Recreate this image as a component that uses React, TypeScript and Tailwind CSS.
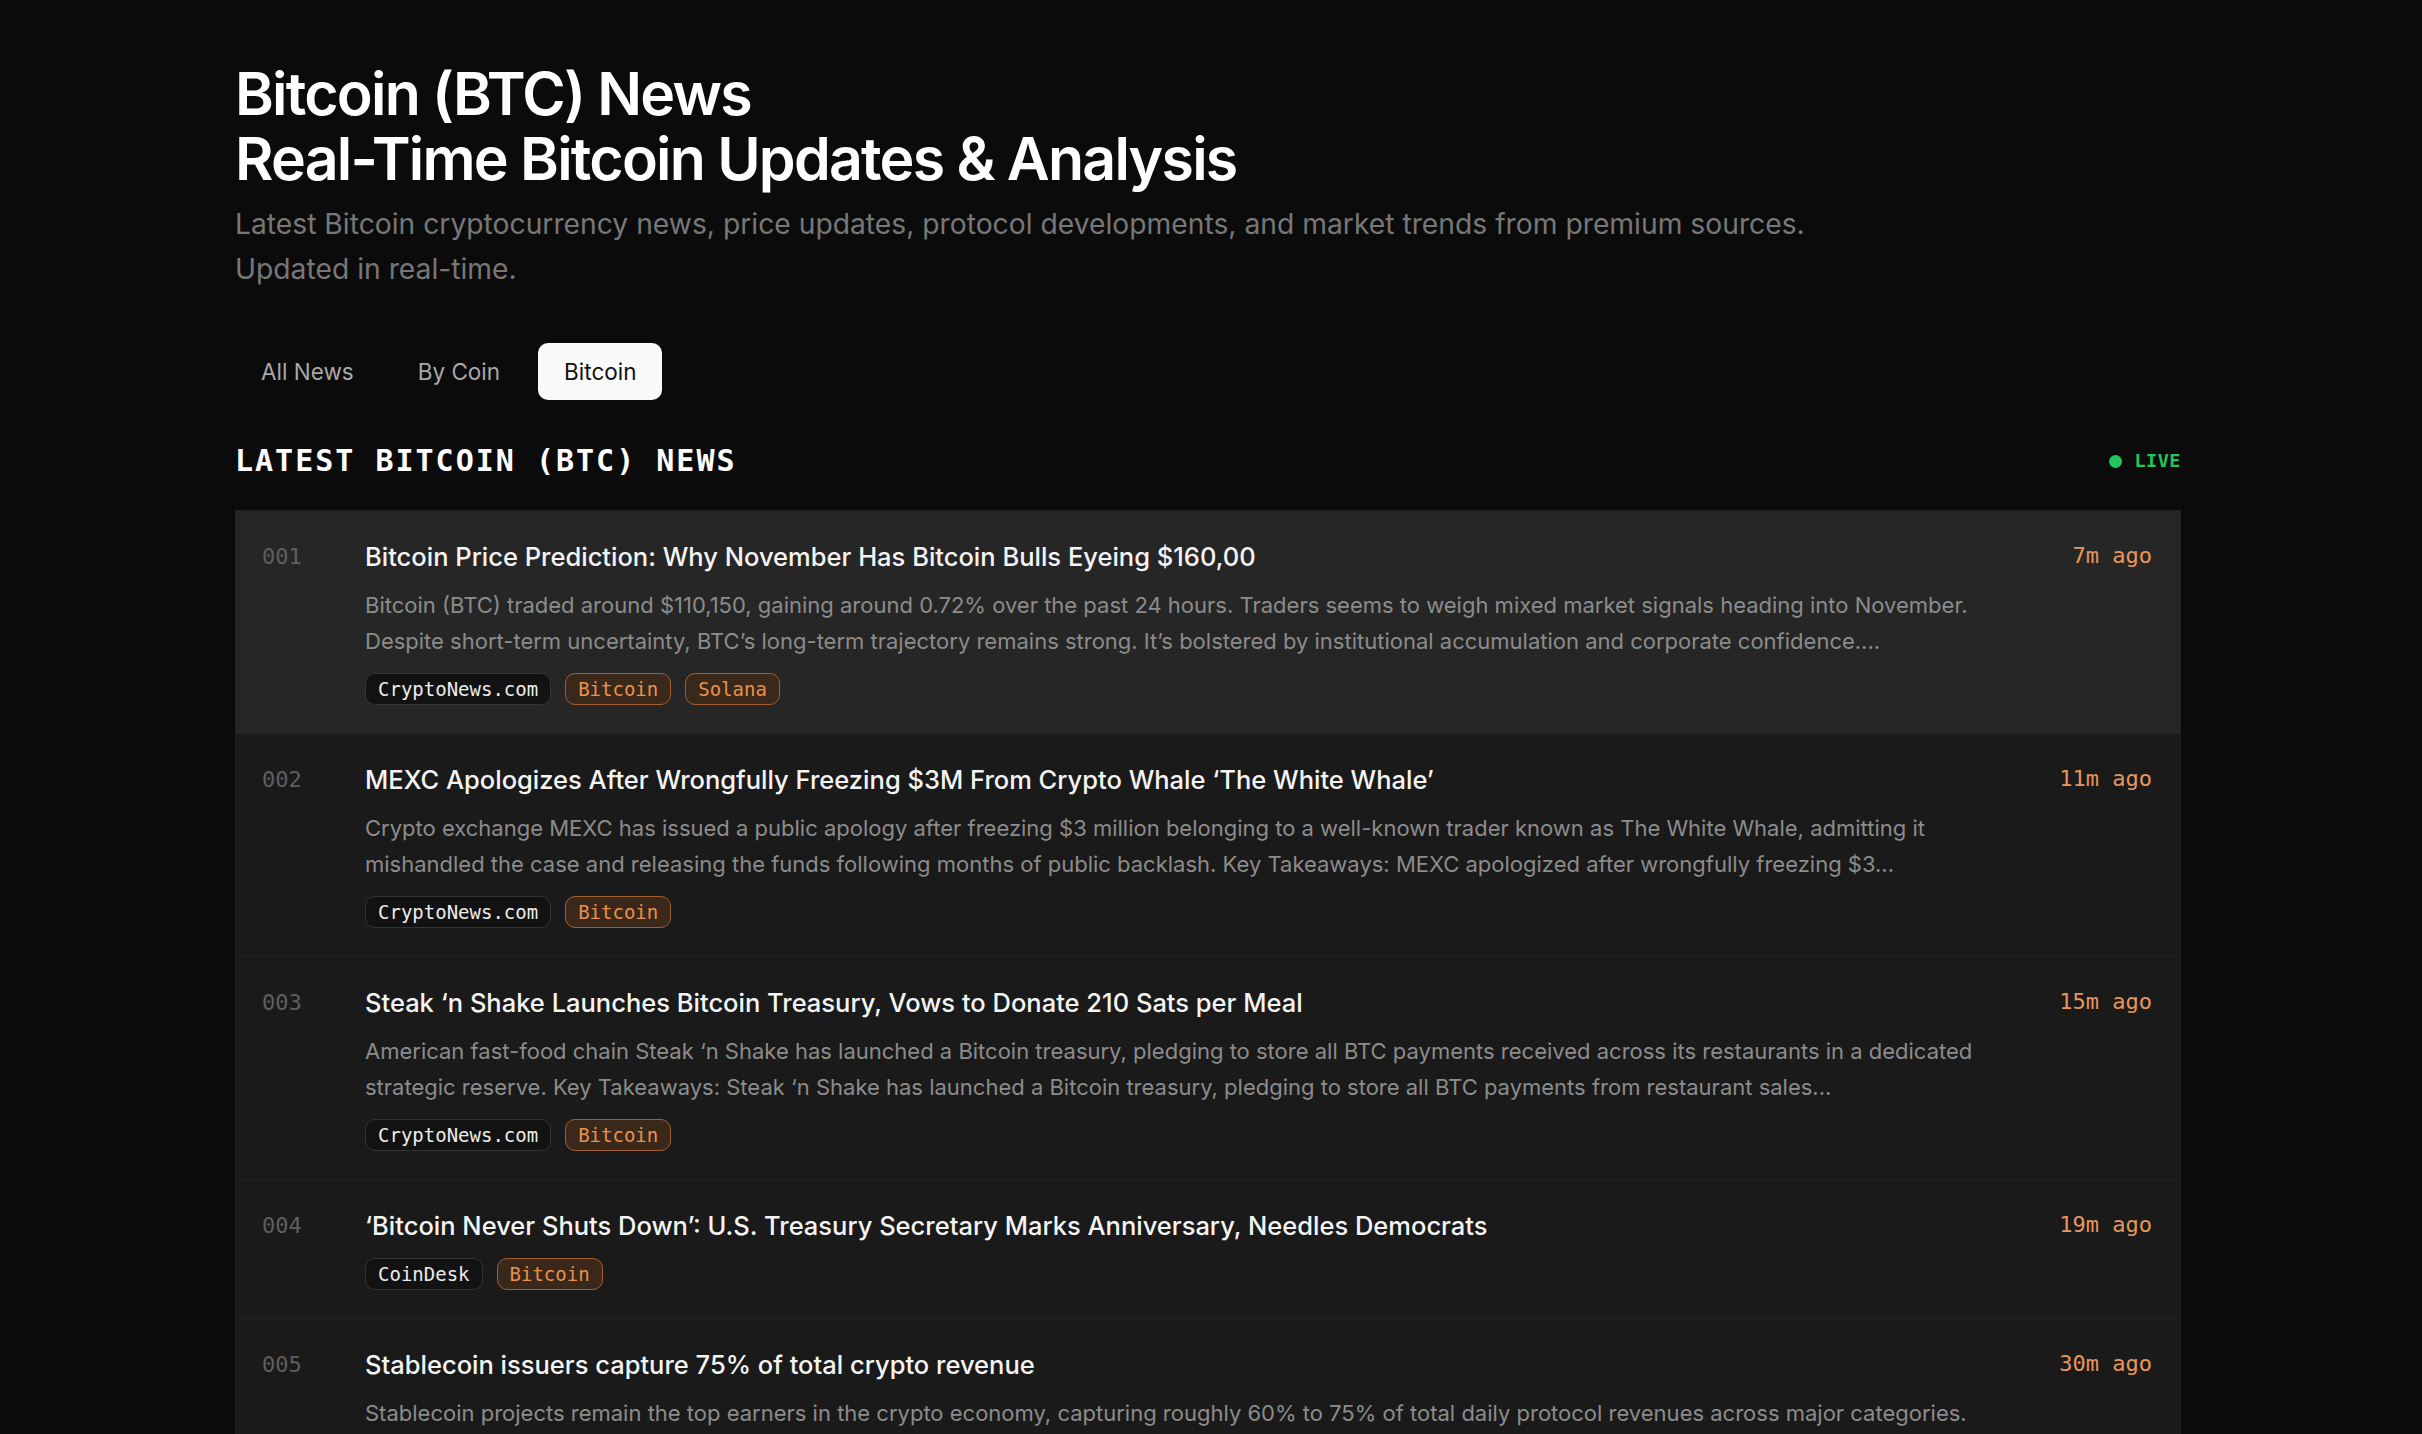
import React from "react";

type NewsItem = {
  id: string;
  title: string;
  summary?: string;
  source: string;
  coins: string[];
  time: string;
};

const NEWS: NewsItem[] = [
  {
    id: "001",
    title: "Bitcoin Price Prediction: Why November Has Bitcoin Bulls Eyeing $160,00",
    summary:
      "Bitcoin (BTC) traded around $110,150, gaining around 0.72% over the past 24 hours. Traders seems to weigh mixed market signals heading into November. Despite short-term uncertainty, BTC’s long-term trajectory remains strong. It’s bolstered by institutional accumulation and corporate confidence....",
    source: "CryptoNews.com",
    coins: ["Bitcoin", "Solana"],
    time: "7m ago",
  },
  {
    id: "002",
    title: "MEXC Apologizes After Wrongfully Freezing $3M From Crypto Whale ‘The White Whale’",
    summary:
      "Crypto exchange MEXC has issued a public apology after freezing $3 million belonging to a well-known trader known as The White Whale, admitting it mishandled the case and releasing the funds following months of public backlash. Key Takeaways: MEXC apologized after wrongfully freezing $3...",
    source: "CryptoNews.com",
    coins: ["Bitcoin"],
    time: "11m ago",
  },
  {
    id: "003",
    title: "Steak ‘n Shake Launches Bitcoin Treasury, Vows to Donate 210 Sats per Meal",
    summary:
      "American fast-food chain Steak ‘n Shake has launched a Bitcoin treasury, pledging to store all BTC payments received across its restaurants in a dedicated strategic reserve. Key Takeaways: Steak ‘n Shake has launched a Bitcoin treasury, pledging to store all BTC payments from restaurant sales...",
    source: "CryptoNews.com",
    coins: ["Bitcoin"],
    time: "15m ago",
  },
  {
    id: "004",
    title: "‘Bitcoin Never Shuts Down’: U.S. Treasury Secretary Marks Anniversary, Needles Democrats",
    source: "CoinDesk",
    coins: ["Bitcoin"],
    time: "19m ago",
  },
  {
    id: "005",
    title: "Stablecoin issuers capture 75% of total crypto revenue",
    summary:
      "Stablecoin projects remain the top earners in the crypto economy, capturing roughly 60% to 75% of total daily protocol revenues across major categories.",
    source: "CoinTelegraph",
    coins: ["Bitcoin"],
    time: "30m ago",
  },
];

const TABS = ["All News", "By Coin", "Bitcoin"];

function NewsRow({ item, active }: { item: NewsItem; active: boolean }) {
  return (
    <div
      className={`flex border-b border-[#242424] pl-[26px] pr-7 pt-7 pb-[28px] ${
        active ? "bg-[#262626]" : "bg-[#1a1a1a]"
      }`}
    >
      {/* index */}
      <div className="w-[103px] shrink-0 font-['DejaVu_Sans_Mono',monospace] text-[22px] leading-[36px] text-[#5f5f5f]">
        {item.id}
      </div>

      {/* body */}
      <div className="min-w-0 flex-1">
        <h3 className="text-[25.5px] font-medium leading-[36px] text-[#f4f4f4]">{item.title}</h3>
        {item.summary && (
          <p className="mt-3 text-[22px] leading-[36px] text-[#8c8c8c]">{item.summary}</p>
        )}
        <div className="mt-[14px] flex gap-[14px] font-['DejaVu_Sans_Mono',monospace] text-[19px]">
          <span className="flex h-[32px] items-center rounded-[10px] border border-[#343434] bg-[#121212] px-3 text-[#ececec]">
            {item.source}
          </span>
          {item.coins.map((c) => (
            <span
              key={c}
              className="flex h-[32px] items-center rounded-[10px] border border-[#a35f2c] bg-[#3a281b] px-3 text-[#e8924c]"
            >
              {c}
            </span>
          ))}
        </div>
      </div>

      {/* time */}
      <div className="ml-8 shrink-0 font-['DejaVu_Sans_Mono',monospace] text-[22px] leading-[34px] text-[#e8975a]">
        {item.time}
      </div>
    </div>
  );
}

export default function App() {
  return (
    <div className="min-h-screen bg-[#0b0b0c] font-['Inter',sans-serif] text-white">
      <div className="ml-[235px] w-[1946px] pt-[61px] pb-20">
        {/* Header */}
        <h1 className="text-[59px] font-semibold leading-[65px] tracking-[-0.03em]">
          Bitcoin (BTC) News
          <br />
          Real-Time Bitcoin Updates &amp; Analysis
        </h1>
        <p className="mt-[11px] max-w-[1640px] text-[28.25px] leading-[45px] text-[#777777]">
          Latest Bitcoin cryptocurrency news, price updates, protocol developments, and market trends from
          premium sources. Updated in real-time.
        </p>

        {/* Tabs */}
        <div className="mt-[51px] flex gap-3">
          {TABS.map((t) => (
            <button
              key={t}
              type="button"
              className={`h-[57px] rounded-[10px] px-[26px] text-[22.5px] ${
                t === "Bitcoin" ? "bg-[#fafafa] text-[#111111]" : "text-[#a8a8a8]"
              }`}
            >
              {t}
            </button>
          ))}
        </div>

        {/* Section heading */}
        <div className="mt-[43px] mb-[31px] flex items-center justify-between">
          <h2 className="font-['DejaVu_Sans_Mono',monospace] text-[30px] font-bold leading-[36px] tracking-[2px]">
            LATEST BITCOIN (BTC) NEWS
          </h2>
          <div className="flex items-center gap-3 font-['DejaVu_Sans_Mono',monospace] text-[18.5px] font-bold tracking-[0.5px] text-[#22c55e]">
            <span className="h-[13px] w-[13px] rounded-full bg-[#22c55e]" />
            LIVE
          </div>
        </div>

        {/* News list */}
        <div className="border border-[#1f1f1f] bg-[#1a1a1a]">
          {NEWS.map((item, i) => (
            <NewsRow key={item.id} item={item} active={i === 0} />
          ))}
        </div>
      </div>
    </div>
  );
}
